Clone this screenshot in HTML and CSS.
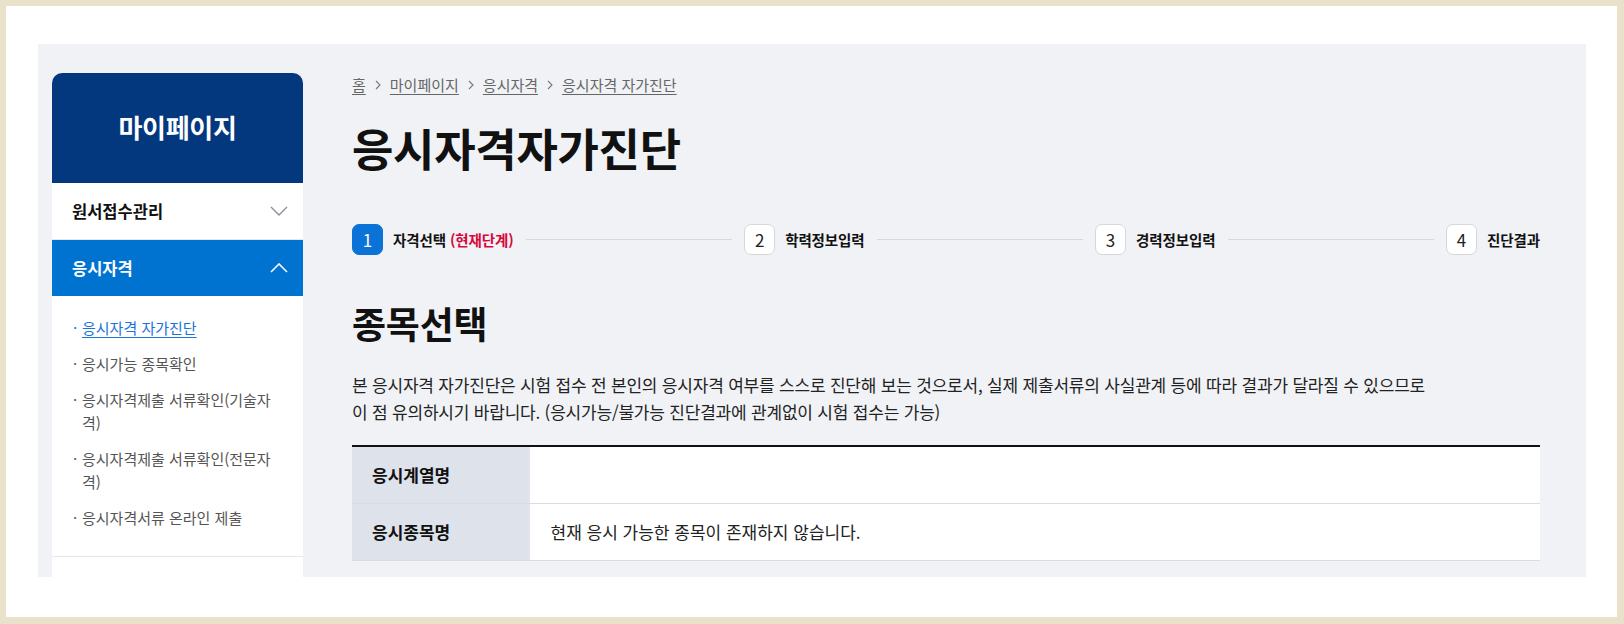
FILE: index.html
```html
<!DOCTYPE html>
<html lang="ko">
<head>
<meta charset="utf-8">
<title>응시자격자가진단</title>
<link rel="stylesheet" href="styles.css">
</head>
<body>
<div class="frame">
  <div class="panel">
    <aside class="sidebar">
      <div class="side-head">마이페이지</div>
      <ul class="side-menu">
        <li class="side-item">
          <span>원서접수관리</span>
          <svg class="chev" width="18" height="10" viewBox="0 0 18 10"><polyline points="1,1 9,9 17,1" fill="none" stroke="#8a8f98" stroke-width="1.4"/></svg>
        </li>
        <li class="side-item active">
          <span>응시자격</span>
          <svg class="chev" width="18" height="10" viewBox="0 0 18 10"><polyline points="1,9 9,1 17,9" fill="none" stroke="#ffffff" stroke-width="1.6"/></svg>
        </li>
        <li class="side-sub">
          <ul class="sub-list">
            <li class="sub-item current"><span class="dot">·</span><a class="sub-text">응시자격 자가진단</a></li>
            <li class="sub-item"><span class="dot">·</span><span class="sub-text">응시가능 종목확인</span></li>
            <li class="sub-item"><span class="dot">·</span><span class="sub-text">응시자격제출 서류확인(기술자격)</span></li>
            <li class="sub-item"><span class="dot">·</span><span class="sub-text">응시자격제출 서류확인(전문자격)</span></li>
            <li class="sub-item"><span class="dot">·</span><span class="sub-text">응시자격서류 온라인 제출</span></li>
          </ul>
        </li>
        <li class="side-item">
          <span>나의 시험 조회</span>
          <svg class="chev" width="18" height="10" viewBox="0 0 18 10"><polyline points="1,1 9,9 17,1" fill="none" stroke="#8a8f98" stroke-width="1.4"/></svg>
        </li>
      </ul>
    </aside>

    <main class="content">
      <nav class="crumbs">
        <a>홈</a>
        <svg class="sep" width="6" height="10" viewBox="0 0 6 10"><polyline points="1,1 5,5 1,9" fill="none" stroke="#777" stroke-width="1.1"/></svg>
        <a>마이페이지</a>
        <svg class="sep" width="6" height="10" viewBox="0 0 6 10"><polyline points="1,1 5,5 1,9" fill="none" stroke="#777" stroke-width="1.1"/></svg>
        <a>응시자격</a>
        <svg class="sep" width="6" height="10" viewBox="0 0 6 10"><polyline points="1,1 5,5 1,9" fill="none" stroke="#777" stroke-width="1.1"/></svg>
        <a>응시자격 자가진단</a>
      </nav>

      <h1 class="title">응시자격자가진단</h1>

      <div class="steps">
        <div class="step on"><span class="num">1</span><span class="label">자격선택 <em>(현재단계)</em></span></div>
        <div class="line"></div>
        <div class="step"><span class="num">2</span><span class="label">학력정보입력</span></div>
        <div class="line"></div>
        <div class="step"><span class="num">3</span><span class="label">경력정보입력</span></div>
        <div class="line"></div>
        <div class="step"><span class="num">4</span><span class="label">진단결과</span></div>
      </div>

      <h2 class="sub-title">종목선택</h2>
      <p class="desc">본 응시자격 자가진단은 시험 접수 전 본인의 응시자격 여부를 스스로 진단해 보는 것으로서, 실제 제출서류의 사실관계 등에 따라 결과가 달라질 수 있으므로<br>이 점 유의하시기 바랍니다. (응시가능/불가능 진단결과에 관계없이 시험 접수는 가능)</p>

      <table class="info">
        <tr><th>응시계열명</th><td></td></tr>
        <tr><th>응시종목명</th><td>현재 응시 가능한 종목이 존재하지 않습니다.</td></tr>
      </table>
    </main>
  </div>
</div>
</body>
</html>
```

FILE: styles.css
```css
* { box-sizing: border-box; }
html, body { margin: 0; padding: 0; }
body {
  background: #e9e1ca;
  padding: 6px 7px 7px 6px;
  width: 1624px;
  height: 624px;
  font-family: "Noto Sans CJK KR", "Noto Sans", sans-serif;
  color: #111;
}
.frame {
  background: #fff;
  width: 100%;
  height: 100%;
  padding: 38px 31px 40px 32px;
}
.panel {
  background: #f0f2f6;
  height: 100%;
  overflow: hidden;
  display: flex;
  padding: 0 0 0 14px;
}
.sidebar {
  width: 251px;
  flex: none;
  margin-top: 29px;
  background: #fff;
  border-radius: 10px 10px 0 0;
  align-self: flex-start;
  overflow: hidden;
}
.side-head {
  height: 110px;
  background: #03387f;
  color: #fff;
  font-size: 26px;
  font-weight: 700;
  display: flex;
  align-items: center;
  justify-content: center;
  padding-bottom: 4px;
  letter-spacing: -0.3px;
}
.side-menu, .sub-list { list-style: none; margin: 0; padding: 0; }
.side-item {
  height: 57px;
  display: flex;
  align-items: center;
  justify-content: space-between;
  padding: 0 15px 0 20px;
  font-size: 16.5px;
  font-weight: 700;
  color: #111;
  border-bottom: 1px solid #e4e6ea;
}
.side-item.active {
  background: #0073d0;
  color: #fff;
  border-bottom: none;
  height: 56px;
}
.side-sub {
  padding: 20px 22px 27px 21px;
  border-bottom: 1px solid #e4e6ea;
}
.sub-list { display: flex; flex-direction: column; gap: 13px; }
.sub-item {
  display: flex;
  font-size: 15px;
  line-height: 23px;
  color: #555;
}
.dot { width: 9px; flex: none; }
.sub-item.current { color: #1a73d9; }
.sub-item.current .sub-text { text-decoration: underline; text-underline-offset: 3px; }

.content {
  width: 1188px;
  margin-left: 49px;
  padding-top: 31px;
}
.crumbs {
  display: flex;
  align-items: center;
  gap: 9px;
  font-size: 15px;
  line-height: 20px;
  color: #666;
}
.crumbs a { text-decoration: underline; text-underline-offset: 3px; color: #666; }
.title {
  margin: 26px 0 0;
  font-size: 45px;
  line-height: 54px;
  font-weight: 700;
  letter-spacing: -0.3px;
  color: #111;
}
.steps {
  margin-top: 49px;
  display: flex;
  align-items: center;
}
.step { display: flex; align-items: center; gap: 10px; }
.num {
  width: 31px;
  height: 31px;
  border-radius: 7px;
  border: 1px solid #d3d7de;
  background: #fff;
  display: flex;
  align-items: center;
  justify-content: center;
  font-size: 17px;
  color: #222;
}
.step.on .num { background: #0b73d8; border-color: #0b73d8; color: #fff; }
.label { font-size: 14.5px; font-weight: 700; letter-spacing: -0.1px; color: #111; }
.label em { font-style: normal; color: #d6083c; }
.line { flex: 1; height: 1px; background: #d5d8de; margin: 0 12px; }

.sub-title {
  margin: 46px 0 0;
  font-size: 37px;
  line-height: 44px;
  font-weight: 700;
  letter-spacing: -0.2px;
}
.desc {
  margin: 26px 0 0;
  font-size: 17px;
  line-height: 27px;
  color: #222;
  letter-spacing: -0.2px;
}
.info {
  margin-top: 20px;
  width: 100%;
  border-collapse: collapse;
  border-top: 2px solid #111;
}
.info th, .info td {
  height: 57px;
  border-bottom: 1px solid #d8dbe0;
  font-size: 17px;
  text-align: left;
}
.info th {
  width: 177px;
  background: #dee2eb;
  padding-left: 20px;
  font-weight: 700;
  border-right: 1px solid #e3e6ea;
}
.info td {
  background: #fff;
  padding-left: 21px;
  color: #222;
}
```
